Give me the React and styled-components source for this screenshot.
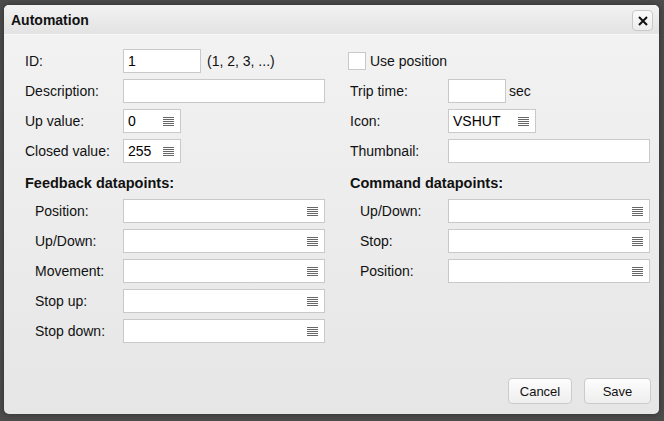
import React from "react"
import styled, { createGlobalStyle } from "styled-components"

const GlobalStyle = createGlobalStyle`
    html, body {
        margin: 0;
        padding: 0;
        background: #4c4c4c;
        font-family: "Liberation Sans", Arial, sans-serif;
        font-size: 14px;
        color: #111;
    }
`

const Page = styled.div`
    width: 664px;
    height: 421px;
    padding: 5px 5px 7px 4px;
    box-sizing: border-box;
`

const Dialog = styled.div`
    width: 655px;
    height: 409px;
    border-radius: 5px;
    overflow: hidden;
    display: flex;
    flex-direction: column;
    background: linear-gradient(#f3f3f3, #e6e6e6);
    box-shadow: 0 0 6px rgba(0, 0, 0, 0.4);
`

const TitleBar = styled.div`
    height: 30px;
    display: flex;
    align-items: center;
    justify-content: space-between;
    padding: 0 6px 0 7px;
    background: linear-gradient(#f2f2f2, #e3e3e3);
    border-bottom: 1px solid #f8f8f8;
    box-sizing: border-box;
`

const Title = styled.h1`
    margin: 1px 0 0;
    font-size: 14px;
    font-weight: bold;
    color: #111;
`

const CloseButton = styled.button`
    width: 21px;
    height: 21px;
    padding: 0;
    border: 1px solid #c8c8c8;
    border-radius: 4px;
    background: linear-gradient(#fbfbfb, #ececec);
    display: flex;
    align-items: center;
    justify-content: center;
    margin-top: 2px;
`

const Body = styled.div`
    flex: 1;
    display: flex;
    flex-direction: column;
    padding: 14px 9px 10px 21px;
`

const Columns = styled.div`
    display: grid;
    grid-template-columns: 325px 1fr;
`

const Column = styled.div`
    display: flex;
    flex-direction: column;
    gap: 6px;
`

const Row = styled.div`
    height: 24px;
    display: flex;
    align-items: center;
`

const Label = styled.label`
    width: ${(p) => (p.$indent ? 88 : 98)}px;
    padding-left: ${(p) => (p.$indent ? 10 : 0)}px;
    flex-shrink: 0;
`

const Heading = styled.div`
    height: 24px;
    display: flex;
    align-items: center;
    padding-top: 4px;
    box-sizing: border-box;
    font-size: 14.5px;
    font-weight: bold;
`

const Field = styled.div`
    position: relative;
    width: ${(p) => p.$width}px;
    height: 24px;
    box-sizing: border-box;
    border: 1px solid #c9c9c9;
    background: #fff;
    display: flex;
    align-items: center;
    padding: 0 4px;
    font-size: 14px;
    color: #000;
`

const MenuIcon = styled.svg`
    position: absolute;
    right: 6px;
    top: 7px;
`

const Hint = styled.span`
    margin-left: ${(p) => p.$gap}px;
`

const Check = styled.span`
    width: 18px;
    height: 18px;
    box-sizing: border-box;
    border: 1px solid #c9c9c9;
    background: #fff;
    margin: 0 4px 0 -2px;
`

const Footer = styled.div`
    margin-top: auto;
    margin-right: -1px;
    display: flex;
    justify-content: flex-end;
    gap: 12px;
`

const Button = styled.button`
    height: 26px;
    min-width: ${(p) => p.$width}px;
    border: 1px solid #cbcbcb;
    border-radius: 4px;
    background: linear-gradient(#fdfdfd, #eeeeee);
    font-family: "Liberation Sans", Arial, sans-serif;
    font-size: 13px;
    color: #111;
    padding: 0 10px;
`

function Menu() {
    return (
        <MenuIcon width="11" height="10" viewBox="0 0 11 10">
            {[0.5, 2.5, 4.5, 6.5, 8.5].map((y) => (
                <line key={y} x1="0" x2="11" y1={y} y2={y} stroke="#666" strokeWidth="1" />
            ))}
        </MenuIcon>
    )
}

function Input({ width, value, select }) {
    return (
        <Field $width={width}>
            {value}
            {select && <Menu />}
        </Field>
    )
}

const feedback = ["Position:", "Up/Down:", "Movement:", "Stop up:", "Stop down:"]
const command = ["Up/Down:", "Stop:", "Position:"]

function App() {
    return (
        <Page>
            <GlobalStyle />
            <Dialog>
                <TitleBar>
                    <Title>Automation</Title>
                    <CloseButton aria-label="Close">
                        <svg width="10" height="10" viewBox="0 0 10 10">
                            <path d="M1 1L9 9M9 1L1 9" stroke="#111" strokeWidth="2" />
                        </svg>
                    </CloseButton>
                </TitleBar>

                <Body>
                    <Columns>
                        <Column>
                            <Row>
                                <Label>ID:</Label>
                                <Input width={78} value="1" />
                                <Hint $gap={6}>(1, 2, 3, ...)</Hint>
                            </Row>
                            <Row>
                                <Label>Description:</Label>
                                <Input width={202} />
                            </Row>
                            <Row>
                                <Label>Up value:</Label>
                                <Input width={58} value="0" select />
                            </Row>
                            <Row>
                                <Label>Closed value:</Label>
                                <Input width={58} value="255" select />
                            </Row>
                            <Heading>Feedback datapoints:</Heading>
                            {feedback.map((name) => (
                                <Row key={name}>
                                    <Label $indent>{name}</Label>
                                    <Input width={202} select />
                                </Row>
                            ))}
                        </Column>

                        <Column>
                            <Row>
                                <Check />
                                Use position
                            </Row>
                            <Row>
                                <Label>Trip time:</Label>
                                <Input width={58} />
                                <Hint $gap={3}>sec</Hint>
                            </Row>
                            <Row>
                                <Label>Icon:</Label>
                                <Input width={88} value="VSHUT" select />
                            </Row>
                            <Row>
                                <Label>Thumbnail:</Label>
                                <Input width={202} />
                            </Row>
                            <Heading>Command datapoints:</Heading>
                            {command.map((name) => (
                                <Row key={name}>
                                    <Label $indent>{name}</Label>
                                    <Input width={202} select />
                                </Row>
                            ))}
                        </Column>
                    </Columns>

                    <Footer>
                        <Button $width={64}>Cancel</Button>
                        <Button $width={67}>Save</Button>
                    </Footer>
                </Body>
            </Dialog>
        </Page>
    )
}

export default App
